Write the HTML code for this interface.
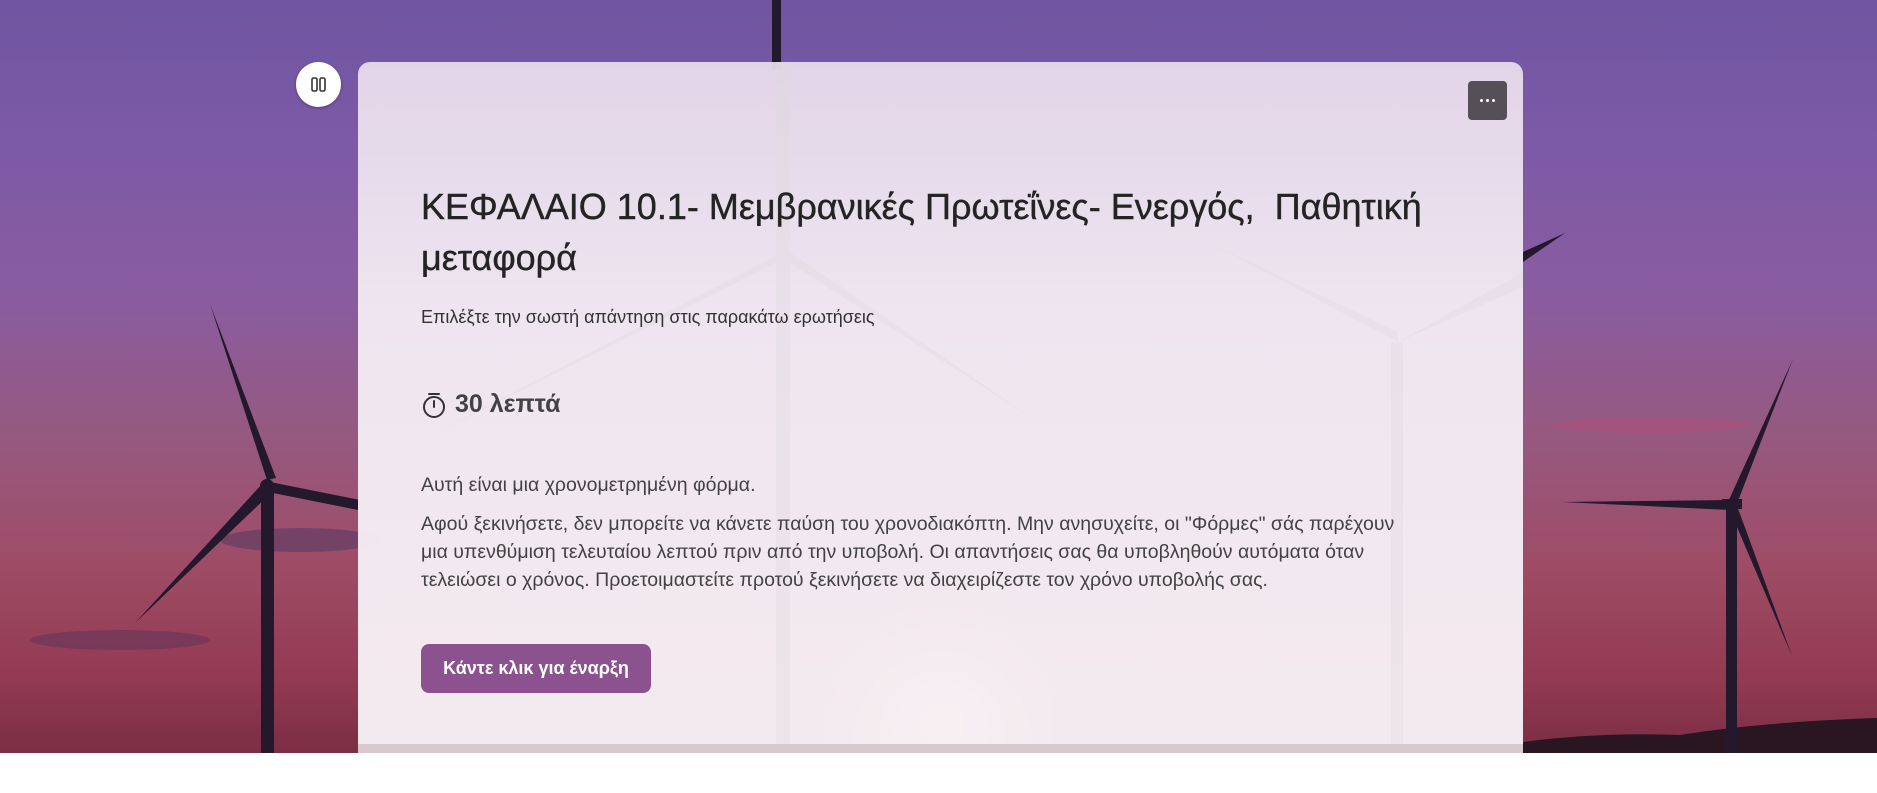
<!DOCTYPE html>
<html><head><meta charset="utf-8"><style>
html,body{margin:0;padding:0;width:1877px;height:793px;overflow:hidden;background:#fff;font-family:"Segoe UI","Liberation Sans","DejaVu Sans",sans-serif}
#bg{position:absolute;left:0;top:0;width:1877px;height:753px;overflow:hidden;background:linear-gradient(180deg,#6f55a2 0%,#7d5aa6 20%,#8a5c9f 40%,#96597f 58%,#9e4c66 75%,#933a52 90%,#7a2e44 100%)}
#card{position:absolute;left:358px;top:62px;width:1165px;height:691px;border-radius:12px 12px 0 0;background:linear-gradient(180deg,rgba(232,220,235,.94) 0%,rgba(243,236,244,.95) 35%,rgba(248,242,246,.96) 100%);overflow:hidden}
#band{position:absolute;left:0;bottom:0;width:100%;height:9px;background:#d8c9cf}
.pause{position:absolute;left:296px;top:62px;width:45px;height:45px;border-radius:50%;background:#fff;box-shadow:0 1px 3px rgba(0,0,0,.3)}
.more{position:absolute;left:1110px;top:19px;width:39px;height:39px;border-radius:4px;background:#555057;display:flex;align-items:center;justify-content:center;gap:3px}
.more i{width:3px;height:3px;background:#fff;border-radius:50%;display:block}
h1{position:absolute;left:63px;top:119px;width:1040px;margin:0;font-size:36px;font-weight:normal;line-height:51px;color:#242424;-webkit-text-stroke:.4px #242424}
.sub{position:absolute;left:63px;top:245px;font-size:18px;color:#333;margin:0}
.timer{position:absolute;left:63px;top:328px;font-size:25px;font-weight:600;color:#424242;display:flex;align-items:center;gap:8px}
.p{position:absolute;left:63px;font-size:19.5px;color:#424242;line-height:28px;width:985px;margin:0}
.btn{position:absolute;left:63px;top:582px;width:230px;height:49px;border-radius:8px;background:#8c518f;color:#fff;font-size:18px;font-weight:bold;text-align:center;line-height:49px}
</style></head><body>
<div id="bg">
<svg width="1877" height="753" style="position:absolute;left:0;top:0">
<defs><radialGradient id="sun" cx="942" cy="720" r="120" gradientUnits="userSpaceOnUse"><stop offset="0" stop-color="#ffe6c8" stop-opacity=".9"/><stop offset="1" stop-color="#ffb0a0" stop-opacity="0"/></radialGradient></defs>
<ellipse cx="300" cy="540" rx="80" ry="12" fill="#4a3560" opacity=".5"/>
<ellipse cx="120" cy="640" rx="90" ry="10" fill="#5a3458" opacity=".5"/>
<ellipse cx="1650" cy="425" rx="100" ry="8" fill="#b0507a" opacity=".5"/>
<circle cx="942" cy="720" r="120" fill="url(#sun)"/>
<path d="M1523 742 Q1600 732 1680 735 Q1760 722 1877 718 L1877 753 L1523 753Z" fill="#2a1620"/>
<g fill="#24182c">
<rect x="261" y="485" width="13" height="268"/>
<path d="M267 480 L210 304 L276 478Z"/>
<path d="M262 484 L135 623 L272 492Z"/>
<path d="M270 482 L360 500 L358 510 L268 492Z"/>
<circle cx="267" cy="486" r="7"/>
<rect x="1726" y="505" width="11" height="248"/>
<path d="M1728 502 L1793 359 L1736 506Z"/>
<path d="M1730 500 L1562 502 L1730 510Z"/>
<path d="M1728 506 L1792 656 L1736 503Z"/>
<rect x="1722" y="499" width="20" height="10"/>
<rect x="772" y="0" width="9" height="70"/>
<path d="M1523 252 L1565 233 L1523 262Z"/>
</g>
</svg>
</div>
<div class="pause"><svg width="45" height="45"><rect x="16" y="16" width="5" height="13" rx="1.5" fill="none" stroke="#333" stroke-width="1.6"/><rect x="24" y="16" width="5" height="13" rx="1.5" fill="none" stroke="#333" stroke-width="1.6"/></svg></div>
<div id="card">
<svg width="1165" height="691" style="position:absolute;left:0;top:0" opacity=".35"><g fill="#e0dade"><rect x="418" y="0" width="14" height="691"/><path d="M425 190 L60 380 L420 200Z"/><path d="M430 200 L680 360 L432 190Z"/><rect x="1033" y="280" width="12" height="420"/><path d="M1040 280 L850 180 L1040 270Z"/><path d="M1040 280 L1165 210 L1165 225Z"/></g></svg>
<div class="more"><i></i><i></i><i></i></div>
<h1>ΚΕΦΑΛΑΙΟ 10.1- Μεμβρανικές Πρωτεΐνες- Ενεργός,&nbsp; Παθητική μεταφορά</h1>
<p class="sub">Επιλέξτε την σωστή απάντηση στις παρακάτω ερωτήσεις</p>
<div class="timer"><svg width="26" height="28" viewBox="0 0 26 28"><circle cx="13" cy="16" r="10" fill="none" stroke="#333" stroke-width="2"/><path d="M8 3h10M13 10v6" stroke="#333" stroke-width="2" stroke-linecap="round"/></svg><span>30 λεπτά</span></div>
<p class="p" style="top:409px">Αυτή είναι μια χρονομετρημένη φόρμα.</p>
<p class="p" style="top:448px">Αφού ξεκινήσετε, δεν μπορείτε να κάνετε παύση του χρονοδιακόπτη. Μην ανησυχείτε, οι "Φόρμες" σάς παρέχουν<br>μια υπενθύμιση τελευταίου λεπτού πριν από την υποβολή. Οι απαντήσεις σας θα υποβληθούν αυτόματα όταν<br>τελειώσει ο χρόνος. Προετοιμαστείτε προτού ξεκινήσετε να διαχειρίζεστε τον χρόνο υποβολής σας.</p>
<div class="btn">Κάντε κλικ για έναρξη</div>
<div id="band"></div>
</div>
</body></html>
